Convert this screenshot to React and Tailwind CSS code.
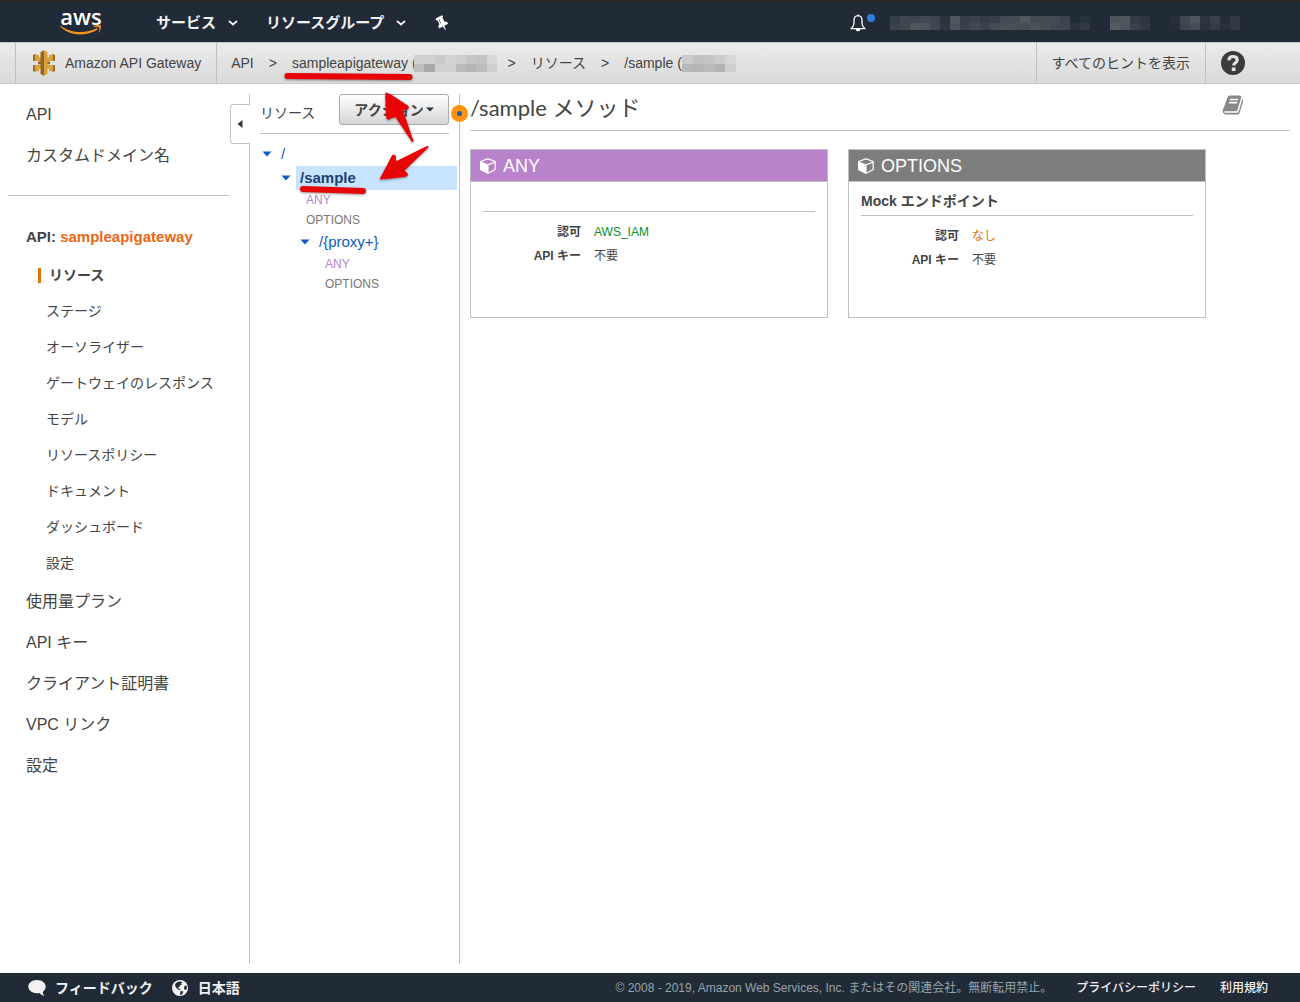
import React from 'react';

const navLinks = ['サービス', 'リソースグループ'];

const apiLinks = [
  'リソース',
  'ステージ',
  'オーソライザー',
  'ゲートウェイのレスポンス',
  'モデル',
  'リソースポリシー',
  'ドキュメント',
  'ダッシュボード',
  '設定',
];

const globalLinks = ['使用量プラン', 'API キー', 'クライアント証明書', 'VPC リンク', '設定'];

const accountTop = ['#353f49', '#3f4750', '#3d4650', '#434a54', '#3b444f', '#2a343f', '#50565e', '#353d48', '#3b434d', '#343c48', '#353e49', '#444b54', '#434b54', '#505860', '#434b54', '#454c54', '#424a53', '#3a434d', '#212b37', '#28323d'];
const accountBottom = ['#3b444c', '#41494f', '#50565c', '#4d545b', '#42484f', '#2d3741', '#4b525a', '#3a434d', '#424a53', '#3a424d', '#454d54', '#4a5159', '#484f57', '#454d55', '#4b5259', '#444c54', '#40494f', '#3e464f', '#2a343f', '#303944'];
const regionTop = ['#4e545c', '#50575e', '#323b46', '#2d3641'];
const regionBottom = ['#575d63', '#4d545b', '#39414b', '#303944'];
const supportTop = ['#28313d', '#404751', '#50565e', '#2c3540', '#3a424c', '#232d39', '#303944'];
const supportBottom = ['#242e3a', '#3d454e', '#474e57', '#28313d', '#343d47', '#28323d', '#2f3843'];
const apiIdTop = ['#d0d0d0', '#d0d0d0', '#cacaca', '#d3d3d3', '#cecece', '#c5c5c5', '#c3c3c3', '#d7d7d7'];
const apiIdBottom = ['#bebebe', '#a9a9a9', '#d0d0d0', '#d1d1d1', '#bababa', '#b4b4b4', '#bcbcbc', '#cecece'];
const resIdTop = ['#cbcbcb', '#c0c0c0', '#c4c4c4', '#cbcbcb', '#d7d7d7'];
const resIdBottom = ['#b8b8b8', '#b5b5b5', '#bbbbbb', '#b3b3b3', '#cfcfcf'];

// Pixelated block that hides private values
const Mosaic = ({ rows, width, height }) => (
  <svg
    width={width}
    height={height}
    viewBox={`0 0 ${rows[0].length} ${rows.length}`}
    preserveAspectRatio="none"
    shapeRendering="crispEdges"
    className="shrink-0"
    aria-hidden="true"
  >
    {rows.map((row, y) =>
      row.map((fill, x) => <rect key={`${x}-${y}`} x={x} y={y} width="1" height="1" fill={fill} />)
    )}
  </svg>
);

const Chevron = () => (
  <svg width="10" height="6" viewBox="0 0 10 6" fill="none" stroke="currentColor" strokeWidth="1.7">
    <path d="M1 1l4 3.500L9 1" />
  </svg>
);

const CaretDown = () => (
  <svg width="10" height="6" viewBox="0 0 10 6" fill="#0f5cb8" className="shrink-0">
    <path d="M0.500 0.500h9L5 5.500z" />
  </svg>
);

const PinIcon = () => (
  <svg width="16" height="16" viewBox="0 0 1792 1792" fill="#fff">
    <path
      transform="rotate(-28 896 896)"
      d="M800 864v-448q0-14-9-23t-23-9-23 9-9 23v448q0 14 9 23t23 9 23-9 9-23zm672 352q0 26-19 45t-45 19h-429l-51 483q-2 12-10.500 20.500t-20.500 8.500h-1q-27 0-32-27l-76-485h-404q-26 0-45-19t-19-45q0-123 78.500-221.500t177.500-98.500v-512q-52 0-90-38t-38-90 38-90 90-38h640q52 0 90 38t38 90-38 90-90 38v512q99 0 177.500 98.500t78.500 221.500z"
    />
  </svg>
);

const BellIcon = () => (
  <svg width="16" height="18" viewBox="0 0 16 18" fill="none" stroke="#fff" strokeWidth="1.300" strokeLinejoin="round">
    <path d="M8 1.700C5.300 1.900 4 3.800 4 6.200v3.300c0 1.800-1 3.300-2.900 5.200h13.800C13 12.800 12 11.300 12 9.500V6.200C12 3.800 10.700 1.900 8 1.700z" />
    <path d="M6.300 15.500a1.800 1.800 0 0 0 3.400 0z" fill="#fff" />
    <path d="M8 0.500v1.200" />
  </svg>
);

const GatewayIcon = () => (
  <svg width="22" height="26" viewBox="0 0 22 26" className="shrink-0">
    <path d="M0 5l2-1v7H0zM0 15h2v7l-2-1z" fill="#9d6a23" />
    <path d="M2 4l4 1.200v2.300h2V11H2zM2 15h6v3.500H6v2.300L2 22z" fill="#d9a13b" />
    <path d="M16 5.200L20 4v7h-6V7.500h2zM14 15h6v7l-4-1.200v-2.300h-2z" fill="#d9a13b" />
    <path d="M20 4l2 1v6h-2zM20 15h2v6l-2 1z" fill="#9d6a23" />
    <path d="M5 11.500h12v2.800H5z" fill="#96651f" />
    <path d="M7.500 2L11 0.200v25.600L7.500 24z" fill="#96651f" />
    <path d="M11 0.200L14.500 2v22L11 25.800z" fill="#d9a13b" />
  </svg>
);

const CubeIcon = () => (
  <svg width="17" height="17" viewBox="0 0 1792 1792" fill="currentColor">
    <path d="M896 1629l640-349v-636l-640 233v752zm-64-865l698-254-698-254-698 254zm832-252v768q0 35-18 65t-49 47l-704 384q-28 16-61 16t-61-16l-704-384q-31-17-49-47t-18-65v-768q0-40 23-73t61-47l704-256q22-8 44-8t44 8l704 256q38 14 61 47t23 73z" />
  </svg>
);

const BookIcon = () => (
  <svg width="22" height="22" viewBox="0 0 1792 1792" fill="#888">
    <path d="M1703 478q40 57 18 129l-275 906q-19 64-76.500 107.500t-122.500 43.500h-923q-77 0-148.500-53.500t-99.500-131.500q-24-67-2-127 0-4 3-27t4-37q1-8-3-21.500t-3-19.500q2-11 8-21t16.500-23.500 16.500-23.500q23-38 45-91.500t30-91.500q3-10 .5-30t-.5-28q3-11 17-28t17-23q21-36 42-92t25-90q1-9-2.500-32t.5-28q4-13 22-30.500t22-22.500q19-26 42.500-84.500t27.500-96.500q1-8-3-25.500t-2-26.500q2-8 9-18t18-23 17-21q8-12 16.500-30.500t15-35 16-36 19.500-32 26.500-23.500 36-11.500 47.500 5.500l-1 3q38-9 51-9h761q74 0 114 56t18 130l-274 906q-36 119-71.500 153.500t-128.500 34.500h-869q-27 0-38 15-11 16-1 43 24 70 144 70h923q29 0 56-15.500t35-41.500l300-987q7-22 5-57 38 15 59 43zm-1064 2q-4 13 2 22.500t20 9.500h608q13 0 25.500-9.500t16.500-22.500l21-64q4-13-2-22.500t-20-9.500h-608q-13 0-25.500 9.500t-16.500 22.500zm-83 256q-4 13 2 22.500t20 9.500h608q13 0 25.500-9.500t16.500-22.500l21-64q4-13-2-22.500t-20-9.500h-608q-13 0-25.500 9.500t-16.500 22.500z" />
  </svg>
);

const HelpIcon = () => (
  <svg width="24" height="24" viewBox="0 0 24 24">
    <circle cx="12" cy="12" r="12" fill="#3b3b3b" />
    <path d="M7.800 9.300C8 6.800 9.600 5.500 12 5.500c2.500 0 4.200 1.300 4.200 3.400 0 2.800-3.500 2.900-3.500 5.600" fill="none" stroke="#e4e4e4" strokeWidth="3.200" />
    <path d="M10.800 16.500h3.700v3.500h-3.700z" fill="#e4e4e4" />
  </svg>
);

const CommentIcon = () => (
  <svg width="18" height="16" viewBox="0 0 18 16" fill="#f2f2f2">
    <path d="M9 0C4 0 0.300 2.900 0.300 6.600S4 13.300 9 13.300c.9 0 1.700-.1 2.500-.3 1 1.500 2.700 2.600 4.800 2.700-1-1-1.500-2.300-1.500-3.800 1.800-1.200 2.900-3.100 2.900-5.300C17.700 2.900 14 0 9 0z" />
  </svg>
);

const GlobeIcon = () => (
  <svg width="16" height="16" viewBox="0 0 16 16">
    <circle cx="8" cy="8" r="8" fill="#f2f2f2" />
    <path d="M3.500 3.500L6 1.800l3-.3 1.500 1.200-1.700.5L10 4.500 8 5.200 7.300 7 6 7.200l.8 1.500L9 9.300l-1 .7-2.300-.8L4 7.500 3 5.500zM12.500 6l2-.8.5 3-1.500 2-1.500-1.500zM8.500 11l3 .5-1.500 3-2 .5z" fill="#212b37" />
  </svg>
);

const TopNav = () => (
  <header className="flex h-[42px] items-center border-t-2 border-[#2a2725] bg-[#212b37] pl-[60px] pr-[60px] pt-[2px] text-[15px] font-bold text-[#f2f2f2]">
    <a href="#home" className="relative flex h-[38px] w-[42px] justify-center font-['Open_Sans',sans-serif] text-[22px] font-semibold leading-[24px] text-white">
      aws
      <svg width="42" height="11" viewBox="0 0 42 11" className="absolute left-0 top-[20px]">
        <path d="M0.500 1.700c11 8.200 25.500 8 36.500 2.300l.7 1.400C26 12.500 10 12.500 0.200 2.500z" fill="#f7941e" />
        <path d="M33 2.400c3-1.800 6.500-1.900 8-.8.3 2.700-.8 5.900-2.900 7.600 1-2.200 1.600-4.400 1.300-5.700-1.400-.7-3.800-.9-6.400-.5z" fill="#f7941e" />
      </svg>
    </a>
    <nav className="ml-[54px] flex items-center gap-7">
      {navLinks.map((label) => (
        <button key={label} type="button" className="flex items-center gap-3 whitespace-nowrap">
          {label}
          <Chevron />
        </button>
      ))}
      <button type="button" aria-label="ピン留め">
        <PinIcon />
      </button>
    </nav>
    <div className="ml-auto flex items-center">
      <button type="button" aria-label="通知" className="relative mr-6">
        <BellIcon />
        <span className="absolute -right-[9px] top-0 h-2 w-2 rounded-full bg-[#2b7de0]" />
      </button>
      <Mosaic rows={[accountTop, accountBottom]} width={200} height={14} />
      <div className="ml-5 flex gap-5">
        <Mosaic rows={[regionTop, regionBottom]} width={40} height={14} />
        <Mosaic rows={[supportTop, supportBottom]} width={70} height={14} />
      </div>
    </div>
  </header>
);

const ServiceBar = () => (
  <div className="flex h-[42px] items-stretch border-y border-t-[#c4c4c4] border-b-[#cccccc] bg-linear-to-b from-[#ebebeb] to-[#dadada] pl-[15px] text-sm text-[#444]">
    <a href="#gateway" className="flex items-center gap-[10px] border-x border-[#bfbfbf] pl-[17px] pr-[15px] whitespace-nowrap">
      <GatewayIcon />
      Amazon API Gateway
    </a>
    <nav className="flex items-center gap-[15px] pl-[14px] whitespace-nowrap">
      <a href="#api">API</a>
      <span>&gt;</span>
      <span className="flex items-center">
        <a href="#sampleapigateway">sampleapigateway</a>
        <span className="-mr-[3px] ml-1">(</span>
        <Mosaic rows={[apiIdTop, apiIdBottom]} width={83} height={17} />
      </span>
      <span className="-ml-1">&gt;</span>
      <a href="#resources">リソース</a>
      <span>&gt;</span>
      <span className="flex items-center">
        <a href="#sample">/sample (</a>
        <Mosaic rows={[resIdTop, resIdBottom]} width={54} height={17} />
      </span>
    </nav>
    <div className="ml-auto flex">
      <button type="button" className="border-x border-[#bfbfbf] px-[15px] whitespace-nowrap">
        すべてのヒントを表示
      </button>
      <button type="button" aria-label="ヘルプ" className="pl-[15px] pr-[55px]">
        <HelpIcon />
      </button>
    </div>
  </div>
);

const Sidebar = () => (
  <aside className="relative w-[250px] shrink-0 border-r border-[#bfbfbf] text-base text-[#444]">
    <nav>
      <div className="flex flex-col pl-[26px] leading-[41px]">
        <a href="#apis">API</a>
        <a href="#domains">カスタムドメイン名</a>
      </div>
      <hr className="ml-2 mr-5 mt-[19px] border-[#bfbfbf]" />
      <p className="mt-[21px] pl-[26px] text-[15px] font-bold leading-10">
        API: <a href="#sampleapigateway" className="text-[#ec6613]">sampleapigateway</a>
      </p>
      <ul className="text-sm leading-9">
        {apiLinks.map((label, i) => (
          <li key={label}>
            {i === 0 ? (
              <a href="#resources" className="flex items-center gap-2 pl-[38px] font-bold">
                <span className="h-[15px] w-[3px] bg-[#e07000]" />
                {label}
              </a>
            ) : (
              <a href="#section" className="block pl-[46px]">{label}</a>
            )}
          </li>
        ))}
      </ul>
      <ul className="pl-[26px] leading-[41px]">
        {globalLinks.map((label) => (
          <li key={label}>
            <a href="#global">{label}</a>
          </li>
        ))}
      </ul>
    </nav>
    <button
      type="button"
      aria-label="サイドバーを閉じる"
      className="absolute -right-px top-[10px] flex h-10 w-5 items-center rounded-l border border-r-0 border-[#bfbfbf] bg-white pl-[6px]"
    >
      <svg width="6" height="8" viewBox="0 0 6 8" fill="#333">
        <path d="M5.500 0v8L0.500 4z" />
      </svg>
    </button>
  </aside>
);

const Tree = () => (
  <section className="relative w-[210px] shrink-0 border-r border-[#bfbfbf] pl-[10px]">
    <div className="mr-[10px] flex h-10 items-start justify-between border-b border-[#bfbfbf]">
      <h2 className="text-sm leading-[38px] text-[#444]">リソース</h2>
      <button
        type="button"
        className="flex h-[31px] w-[110px] items-center justify-center gap-[2px] rounded-[3px] border border-[#a9a9a9] bg-linear-to-b from-white to-[#d6d6d6] text-sm font-bold text-[#444]"
      >
        アクション
        <svg width="8" height="5" viewBox="0 0 8 5" fill="#333">
          <path d="M0 0.500h8L4 4.500z" />
        </svg>
      </button>
    </div>
    <ul className="mt-2 mr-[2px] text-[15px] leading-6 text-[#0f5cb8]">
      <li className="flex items-center gap-[9px] pl-[2px]">
        <CaretDown />
        <a href="#root">/</a>
      </li>
      <li className="flex items-center gap-[5px] pl-[21px]">
        <CaretDown />
        <a href="#sample" className="grow bg-[#c8e3ff] pl-1 font-bold text-[#1c4274]">/sample</a>
      </li>
      <li className="pl-[46px] text-xs leading-5"><a href="#any" className="text-[#b983cc]">ANY</a></li>
      <li className="pl-[46px] text-xs leading-5"><a href="#options" className="text-[#777]">OPTIONS</a></li>
      <li className="flex items-center gap-[9px] pl-10">
        <CaretDown />
        <a href="#proxy">/&#123;proxy+&#125;</a>
      </li>
      <li className="pl-[65px] text-xs leading-5"><a href="#proxy-any" className="text-[#b983cc]">ANY</a></li>
      <li className="pl-[65px] text-xs leading-5"><a href="#proxy-options" className="text-[#777]">OPTIONS</a></li>
    </ul>
    {/* splitter handle */}
    <span className="absolute -right-[9px] top-[11px] z-10 flex h-[17px] w-[17px] items-center justify-center rounded-full bg-[#ff9208]">
      <span className="h-[5px] w-[5px] rounded-full bg-[#0f5cb8]" />
    </span>
  </section>
);

const MethodCard = ({ name, headClass, endpoint, auth, authClass }) => (
  <article className="h-[169px] w-[358px] border border-[#bfbfbf] text-[#444]">
    <h3 className={`flex h-8 items-center gap-[6px] border-b border-[#bfbfbf] pl-[9px] text-lg text-white ${headClass}`}>
      <CubeIcon />
      {name}
    </h3>
    <div className="px-3 pt-2">
      <h4 className="min-h-[22px] border-b border-[#bfbfbf] pb-[2px] text-sm font-bold leading-[23px]">{endpoint}</h4>
      <dl className="mt-2 grid grid-cols-[98px_1fr] gap-x-[13px] text-xs leading-6">
        <dt className="text-right font-bold">認可</dt>
        <dd className={authClass}>{auth}</dd>
        <dt className="text-right font-bold">API キー</dt>
        <dd>不要</dd>
      </dl>
    </div>
  </article>
);

const Content = () => (
  <main className="min-w-0 grow px-[10px]">
    <div className="flex h-[37px] items-start justify-between border-b border-[#bfbfbf] pr-[46px]">
      <h1 className="font-[Lato,'Noto_Sans_CJK_JP',sans-serif] text-[22px] leading-7 text-[#444]">/sample メソッド</h1>
      <button type="button" aria-label="ドキュメント">
        <BookIcon />
      </button>
    </div>
    <div className="mt-[18px] flex flex-wrap gap-5">
      <MethodCard name="ANY" headClass="bg-[#b983cc]" auth="AWS_IAM" authClass="text-[#068f2e]" />
      <MethodCard name="OPTIONS" headClass="bg-[#7d7d7d]" endpoint="Mock エンドポイント" auth="なし" authClass="text-[#e07000]" />
    </div>
  </main>
);

const Footer = () => (
  <footer className="flex h-[29px] items-center bg-[#212b37] pl-7 pr-8 text-xs text-[#f2f2f2] whitespace-nowrap">
    <button type="button" className="flex items-center gap-[9px] text-sm font-bold">
      <CommentIcon />
      フィードバック
    </button>
    <button type="button" className="ml-[19px] flex items-center gap-[10px] text-sm font-bold">
      <GlobeIcon />
      日本語
    </button>
    <p className="ml-auto text-[#97a3a8]">© 2008 - 2019, Amazon Web Services, Inc. またはその関連会社。無断転用禁止。</p>
    <a href="#privacy" className="ml-6 font-medium">プライバシーポリシー</a>
    <a href="#terms" className="ml-6 font-medium">利用規約</a>
  </footer>
);

// Hand drawn red arrows and underlines
const Annotations = () => (
  <svg
    width="146"
    height="124"
    viewBox="284 72 146 124"
    className="pointer-events-none absolute left-[284px] top-[72px] z-20 drop-shadow-[0_1px_1px_rgba(0,0,0,0.4)]"
    fill="#e80505"
    stroke="#e80505"
    strokeLinejoin="round"
    strokeLinecap="round"
    aria-hidden="true"
  >
    <path d="M287.500 76L409.500 77" strokeWidth="6" />
    <path d="M303 189L363 191" strokeWidth="6" />
    <path d="M386.500 93.500L407 107L402 110.500L412.500 141L396 116L388 118Z" strokeWidth="2" />
    <path d="M387.500 97L388.500 117.500M389 96L406.500 107.500" strokeWidth="4.500" />
    <path d="M381 178.500L393.500 156.500L396 162.500L427.500 147L403 170.500L406.500 174Z" strokeWidth="2" />
    <path d="M384.500 175L393.700 157M385 177L405.500 174.500" strokeWidth="4.500" />
  </svg>
);

export default function App() {
  return (
    <div className="relative flex min-h-screen flex-col bg-white font-['Liberation_Sans','Noto_Sans_CJK_JP',sans-serif]">
      <TopNav />
      <ServiceBar />
      <div className="mt-[10px] mb-[9px] flex grow">
        <Sidebar />
        <Tree />
        <Content />
      </div>
      <Footer />
      <Annotations />
    </div>
  );
}
